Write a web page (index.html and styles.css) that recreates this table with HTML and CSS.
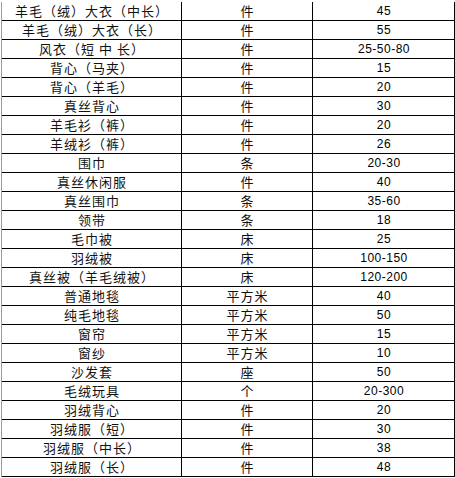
FILE: index.html
```html
<!DOCTYPE html>
<html lang="zh-CN">
<head>
<meta charset="utf-8">
<link rel="stylesheet" href="styles.css">
</head>
<body>
<div class="sheet">
  <div class="row"><div class="c name">羊毛（绒）大衣（中长）</div><div class="c unit">件</div><div class="c num">45</div></div>
  <div class="row"><div class="c name">羊毛（绒）大衣（长）</div><div class="c unit">件</div><div class="c num">55</div></div>
  <div class="row"><div class="c name">风衣（短 中 长）</div><div class="c unit">件</div><div class="c num">25-50-80</div></div>
  <div class="row"><div class="c name">背心（马夹）</div><div class="c unit">件</div><div class="c num">15</div></div>
  <div class="row"><div class="c name">背心（羊毛）</div><div class="c unit">件</div><div class="c num">20</div></div>
  <div class="row"><div class="c name">真丝背心</div><div class="c unit">件</div><div class="c num">30</div></div>
  <div class="row"><div class="c name">羊毛衫（裤）</div><div class="c unit">件</div><div class="c num">20</div></div>
  <div class="row"><div class="c name">羊绒衫（裤）</div><div class="c unit">件</div><div class="c num">26</div></div>
  <div class="row"><div class="c name">围巾</div><div class="c unit">条</div><div class="c num">20-30</div></div>
  <div class="row"><div class="c name">真丝休闲服</div><div class="c unit">件</div><div class="c num">40</div></div>
  <div class="row"><div class="c name">真丝围巾</div><div class="c unit">条</div><div class="c num">35-60</div></div>
  <div class="row"><div class="c name">领带</div><div class="c unit">条</div><div class="c num">18</div></div>
  <div class="row"><div class="c name">毛巾被</div><div class="c unit">床</div><div class="c num">25</div></div>
  <div class="row"><div class="c name">羽绒被</div><div class="c unit">床</div><div class="c num">100-150</div></div>
  <div class="row"><div class="c name">真丝被（羊毛绒被）</div><div class="c unit">床</div><div class="c num">120-200</div></div>
  <div class="row"><div class="c name">普通地毯</div><div class="c unit">平方米</div><div class="c num">40</div></div>
  <div class="row"><div class="c name">纯毛地毯</div><div class="c unit">平方米</div><div class="c num">50</div></div>
  <div class="row"><div class="c name">窗帘</div><div class="c unit">平方米</div><div class="c num">15</div></div>
  <div class="row"><div class="c name">窗纱</div><div class="c unit">平方米</div><div class="c num">10</div></div>
  <div class="row"><div class="c name">沙发套</div><div class="c unit">座</div><div class="c num">50</div></div>
  <div class="row"><div class="c name">毛绒玩具</div><div class="c unit">个</div><div class="c num">20-300</div></div>
  <div class="row"><div class="c name">羽绒背心</div><div class="c unit">件</div><div class="c num">20</div></div>
  <div class="row"><div class="c name">羽绒服（短）</div><div class="c unit">件</div><div class="c num">30</div></div>
  <div class="row"><div class="c name">羽绒服（中长）</div><div class="c unit">件</div><div class="c num">38</div></div>
  <div class="row"><div class="c name">羽绒服（长）</div><div class="c unit">件</div><div class="c num">48</div></div>
</div>
</body>
</html>
```

FILE: styles.css
```css
html, body {
  margin: 0;
  padding: 0;
  background: #ffffff;
}

.sheet {
  margin: 2px 0 0 1px;
  width: 454px;
  box-sizing: border-box;
  border-left: 1px solid #9a9a9a;
  color: #000;
}

.row {
  display: grid;
  grid-template-columns: 180px 131px 142px;
  height: 19px;
}

.c {
  box-sizing: border-box;
  border-right: 1px solid #000;
  border-bottom: 1px solid #000;
  height: 19px;
  line-height: 18px;
  text-align: center;
  white-space: nowrap;
  overflow: hidden;
}

.name, .unit {
  font-family: "Noto Sans CJK SC", "Noto Sans", sans-serif;
  font-size: 13px;
  letter-spacing: 1px;
  text-indent: 1px;
  color: #111;
}

.num {
  font-family: "Liberation Sans", Arial, sans-serif;
  font-size: 12px;
  letter-spacing: 0.5px;
  text-indent: 1px;
}
```
